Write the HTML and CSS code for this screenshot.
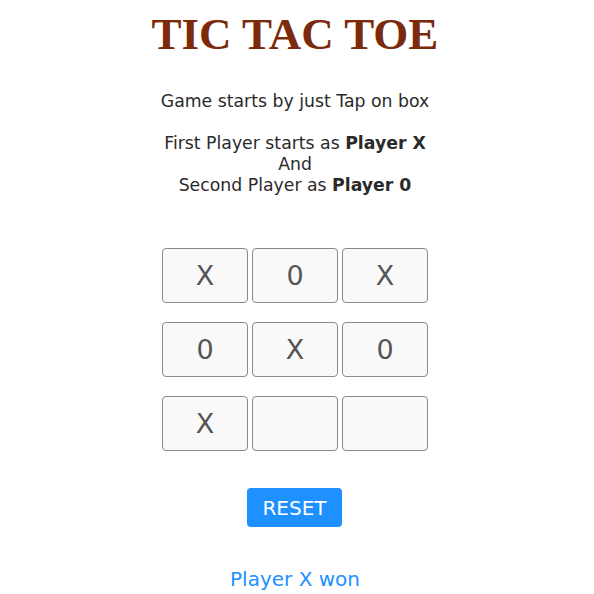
FILE: index.html
```html
<!DOCTYPE html>
<html>
<head>
<meta charset="utf-8">
<link rel="stylesheet" href="styles.css">
</head>
<body>
<div class="page">
  <h1 class="title">TIC TAC TOE</h1>
  <div class="intro">
    <p class="line">Game starts by just Tap on box</p>
    <p class="line gap">First Player starts as <b>Player X</b></p>
    <p class="line">And</p>
    <p class="line">Second Player as <b>Player 0</b></p>
  </div>
  <div class="board">
    <div class="row">
      <div class="cell">X</div>
      <div class="cell">0</div>
      <div class="cell">X</div>
    </div>
    <div class="row">
      <div class="cell">0</div>
      <div class="cell">X</div>
      <div class="cell">0</div>
    </div>
    <div class="row">
      <div class="cell">X</div>
      <div class="cell"></div>
      <div class="cell"></div>
    </div>
  </div>
  <div class="actions">
    <button class="reset">RESET</button>
  </div>
  <div class="status">Player X won</div>
</div>
</body>
</html>
```
FILE: styles.css
```css
html, body {
  margin: 0;
  padding: 0;
  background: #ffffff;
}
.page {
  width: 590px;
  display: flex;
  flex-direction: column;
  align-items: center;
  font-family: "DejaVu Sans", Verdana, sans-serif;
  color: #2a2a2a;
}
.title {
  margin: 10px 0 0 0;
  font-family: "Liberation Serif", "Times New Roman", serif;
  font-weight: bold;
  font-size: 45px;
  line-height: 48px;
  color: #7b2a0c;
}
.intro {
  margin-top: 33px;
  text-align: center;
  font-size: 17.3px;
  line-height: 21px;
}
.line {
  margin: 0;
}
.gap {
  margin-top: 21px;
}
.board {
  margin-top: 52px;
  display: flex;
  flex-direction: column;
  gap: 19px;
}
.row {
  display: flex;
  gap: 4px;
}
.cell {
  width: 84px;
  height: 53px;
  border: 1px solid #8a8a8a;
  border-radius: 4px;
  background: #f9f9f9;
  color: #555555;
  font-size: 27px;
  display: flex;
  align-items: center;
  justify-content: center;
}
.actions {
  margin-top: 37px;
  margin-right: 1px;
}
.reset {
  width: 95px;
  height: 39px;
  border: none;
  border-radius: 4px;
  background: #1e90ff;
  color: #ffffff;
  font-family: "DejaVu Sans", Verdana, sans-serif;
  font-size: 20px;
  padding: 0;
}
.status {
  margin-top: 40px;
  font-size: 20px;
  color: #1e90ff;
}
```
